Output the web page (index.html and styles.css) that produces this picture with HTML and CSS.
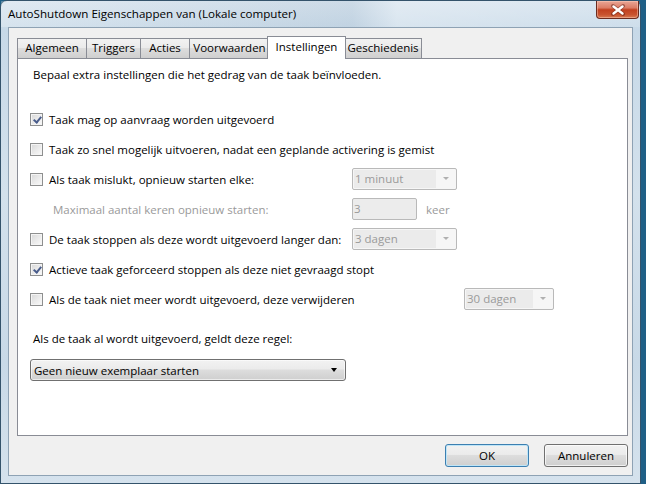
FILE: index.html
```html
<!DOCTYPE html>
<html lang="nl">
<head>
    <meta charset="UTF-8">
    <title>AutoShutdown Eigenschappen</title>
    <link rel="stylesheet" href="styles.css">
</head>
<body>
    <div class="window">
        <div class="titlebar">
            <span class="title">AutoShutdown Eigenschappen van (Lokale computer)</span>
            <div class="close-btn">
                <svg width="16" height="12" viewBox="0 0 16 12">
                    <path d="M3 2 L13 10 M13 2 L3 10" stroke="#5a1a10" stroke-width="4" stroke-linecap="round" opacity="0.45"/>
                    <path d="M3.5 2.5 L12.5 9.5 M12.5 2.5 L3.5 9.5" stroke="#fff" stroke-width="2.4" stroke-linecap="round"/>
                </svg>
            </div>
        </div>

        <div class="client">
            <div class="tabs">
                <div class="tab tab-general">Algemeen</div>
                <div class="tab tab-triggers">Triggers</div>
                <div class="tab tab-actions">Acties</div>
                <div class="tab tab-conditions">Voorwaarden</div>
                <div class="tab tab-settings active">Instellingen</div>
                <div class="tab tab-history">Geschiedenis</div>
            </div>

            <div class="panel">
                <p class="intro">Bepaal extra instellingen die het gedrag van de taak beïnvloeden.</p>

                <div class="options">
                    <div class="row">
                        <span class="check checked"></span>
                        <span>Taak mag op aanvraag worden uitgevoerd</span>
                    </div>
                    <div class="row">
                        <span class="check"></span>
                        <span>Taak zo snel mogelijk uitvoeren, nadat een geplande activering is gemist</span>
                    </div>
                    <div class="row">
                        <span class="check"></span>
                        <span class="label-col">Als taak mislukt, opnieuw starten elke:</span>
                        <div class="dropdown disabled"><span class="value">1 minuut</span><span class="arrow"></span></div>
                    </div>
                    <div class="row">
                        <span class="label-col indent disabled-text">Maximaal aantal keren opnieuw starten:</span>
                        <div class="textbox disabled">3</div>
                        <span class="unit">keer</span>
                    </div>
                    <div class="row">
                        <span class="check"></span>
                        <span class="label-col">De taak stoppen als deze wordt uitgevoerd langer dan:</span>
                        <div class="dropdown disabled"><span class="value">3 dagen</span><span class="arrow"></span></div>
                    </div>
                    <div class="row">
                        <span class="check checked"></span>
                        <span>Actieve taak geforceerd stoppen als deze niet gevraagd stopt</span>
                    </div>
                    <div class="row">
                        <span class="check"></span>
                        <span class="label-col wide">Als de taak niet meer wordt uitgevoerd, deze verwijderen</span>
                        <div class="dropdown disabled short"><span class="value">30 dagen</span><span class="arrow"></span></div>
                    </div>
                </div>

                <p class="rule-label">Als de taak al wordt uitgevoerd, geldt deze regel:</p>
                <div class="combo">
                    <span>Geen nieuw exemplaar starten</span>
                    <span class="combo-arrow"></span>
                </div>
            </div>

            <div class="buttons">
                <button class="btn default">OK</button>
                <button class="btn">Annuleren</button>
            </div>
        </div>
    </div>
</body>
</html>
```

FILE: styles.css
```css
html, body {
    margin: 0;
    padding: 0;
}
body {
    width: 646px;
    height: 484px;
    overflow: hidden;
    background: #1f5f86;
    font-family: "Open Sans", "Noto Sans", sans-serif;
    font-size: 11.5px;
    color: #000;
}

/* window frame */
.window {
    box-sizing: border-box;
    width: 641px;
    height: 484px;
    border: 1px solid #34536b;
    border-radius: 7px 7px 0 0;
    background: linear-gradient(to bottom, #d6e3ee 0%, #c7d9e8 6%, #d3e1ec 40%, #c8d9e7 75%, #d5e2ed 100%);
    display: flex;
    flex-direction: column;
}
.titlebar {
    height: 26px;
    display: flex;
    align-items: flex-start;
    padding: 0 1px 0 7px;
    background: linear-gradient(to right, rgba(255,255,255,0.25), rgba(140,160,180,0.12) 55%, rgba(255,255,255,0.3) 62%, rgba(255,255,255,0.1));
}
.title {
    margin-top: 5px;
    font-size: 11.6px;
    color: #000;
}
.close-btn {
    margin-left: auto;
    width: 41px;
    height: 17px;
    border: 1px solid #6b2b1f;
    border-top: none;
    border-radius: 0 0 4px 4px;
    background: linear-gradient(to bottom, #e9a696 0%, #dc7d66 40%, #c1401f 52%, #c9532f 80%, #d77a52 100%);
    display: flex;
    align-items: center;
    justify-content: center;
    box-shadow: inset 0 0 0 1px rgba(255,210,190,0.45);
}

.client {
    box-sizing: border-box;
    width: 625px;
    height: 449px;
    margin-left: 7px;
    border: 1px solid #8ea2b4;
    background: #f0f0f0;
    display: flex;
    flex-direction: column;
}

/* tabs */
.tabs {
    display: flex;
    align-items: flex-end;
    height: 22px;
    margin-top: 8px;
    padding-left: 8px;
    position: relative;
    z-index: 1;
}
.tab {
    box-sizing: border-box;
    height: 20px;
    line-height: 18px;
    text-align: center;
    border: 1px solid #898c95;
    border-bottom: none;
    margin-right: -1px;
    background: linear-gradient(to bottom, #f2f2f2 0%, #ebebeb 45%, #dddddd 50%, #cfcfcf 100%);
}
.tab-general { width: 70px; }
.tab-triggers { width: 55px; }
.tab-actions { width: 50px; }
.tab-conditions { width: 81px; }
.tab-settings { width: 79px; }
.tab-history { width: 78px; }
.tab.active {
    height: 23px;
    margin: 0 -2px -1px -2px;
    line-height: 20px;
    background: #fff;
    position: relative;
    z-index: 2;
}

.panel {
    box-sizing: border-box;
    width: 611px;
    height: 378px;
    margin-left: 8px;
    border: 1px solid #898c95;
    background: #fff;
    padding: 8px 0 0 12px;
}
.intro {
    margin: 0 0 21px 3px;
    line-height: 16px;
}

/* option rows */
.row {
    display: flex;
    align-items: center;
    height: 30px;
}
.check {
    box-sizing: border-box;
    width: 13px;
    height: 13px;
    margin-right: 6px;
    border: 1px solid #8e8f8f;
    background: linear-gradient(135deg, #d8d8d8, #fbfbfb);
    box-shadow: inset 0 0 0 1px #f4f4f4;
    flex-shrink: 0;
}
.check.checked::after {
    content: "";
    display: block;
    width: 3px;
    height: 6px;
    margin: 1px 0 0 3.5px;
    border: solid #4a5d8c;
    border-width: 0 2px 2px 0;
    transform: rotate(40deg);
}
.label-col {
    width: 303px;
}
.label-col.indent {
    box-sizing: border-box;
    width: 322px;
    padding-left: 23px;
}
.label-col.wide {
    width: 415px;
}
.disabled-text {
    color: #9a9a9a;
}

.dropdown {
    box-sizing: border-box;
    width: 105px;
    height: 22px;
    border: 1px solid #b9b9b9;
    border-radius: 2px;
    background: #f6f6f6;
    display: flex;
    align-items: stretch;
    color: #9a9a9a;
}
.dropdown.short {
    width: 90px;
}
.dropdown .value {
    flex: 1;
    margin: 1px 0 1px 1px;
    padding-left: 1px;
    background: #ebebeb;
    line-height: 18px;
}
.dropdown .arrow {
    width: 20px;
    position: relative;
}
.dropdown .arrow::after {
    content: "";
    position: absolute;
    left: 7px;
    top: 8px;
    border-style: solid;
    border-color: #b0b0b0 transparent transparent transparent;
    border-width: 3px 3px 0 3px;
}
.textbox {
    box-sizing: border-box;
    width: 65px;
    height: 22px;
    border: 1px solid #b9b9b9;
    border-radius: 2px;
    background: #ececec;
    color: #9a9a9a;
    line-height: 20px;
    padding-left: 1px;
}
.unit {
    margin-left: 9px;
    color: #9a9a9a;
}

.rule-label {
    margin: 17px 0 12px 3px;
    line-height: 16px;
}
.combo {
    box-sizing: border-box;
    width: 316px;
    height: 22px;
    border: 1px solid #707070;
    border-radius: 3px;
    background: linear-gradient(to bottom, #f2f2f2 0%, #ebebeb 45%, #dddddd 50%, #cfcfcf 100%);
    box-shadow: inset 0 0 0 1px rgba(255,255,255,0.6);
    display: flex;
    align-items: center;
    padding-left: 3px;
}
.combo-arrow {
    margin-left: auto;
    margin-right: 8px;
    border-style: solid;
    border-color: #000 transparent transparent transparent;
    border-width: 4px 3.5px 0 3.5px;
}

/* dialog buttons */
.buttons {
    display: flex;
    justify-content: flex-end;
    gap: 15px;
    padding: 8px 4px 0 0;
}
.btn {
    box-sizing: border-box;
    width: 84px;
    height: 23px;
    font-family: inherit;
    font-size: 11.5px;
    border: 1px solid #707070;
    border-radius: 3px;
    background: linear-gradient(to bottom, #f2f2f2 0%, #ebebeb 45%, #dddddd 50%, #cfcfcf 100%);
    box-shadow: inset 0 0 0 1px rgba(255,255,255,0.7);
    padding: 0;
    color: #000;
}
.btn.default {
    border-color: #3c7fb1;
    box-shadow: inset 0 0 0 1px #bfe5f7;
}
```
